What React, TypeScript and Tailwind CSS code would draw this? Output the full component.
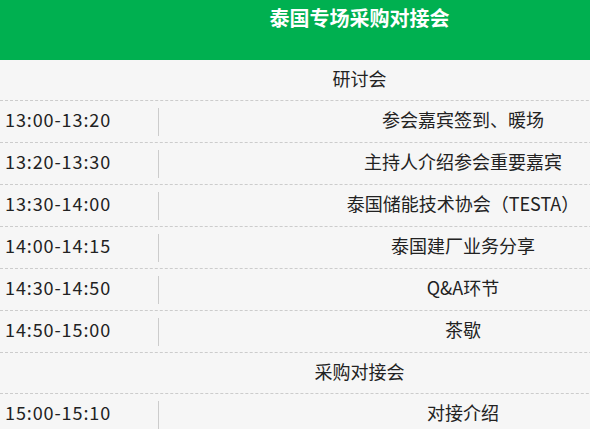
const rows1 = [
  ["13:00-13:20", "参会嘉宾签到、暖场"],
  ["13:20-13:30", "主持人介绍参会重要嘉宾"],
  ["13:30-14:00", "泰国储能技术协会（TESTA）"],
  ["14:00-14:15", "泰国建厂业务分享"],
  ["14:30-14:50", "Q&A环节"],
  ["14:50-15:00", "茶歇"],
];

const rows2 = [["15:00-15:10", "对接介绍"]];

function Section({ title }: { title: string }) {
  return (
    <div className="h-[41px] border-b border-dashed border-[#cccccc] flex items-center justify-center w-[719px]">
      <span className="pb-[3px]">{title}</span>
    </div>
  );
}

function Row({ time, text }: { time: string; text: string }) {
  return (
    <div className="h-[42px] border-b border-dashed border-[#cccccc] flex items-center">
      <div className="w-[159px] h-[28px] border-r border-[#cccccc] flex items-center pl-[5px] pb-[4px] tracking-[0.9px]">
        {time}
      </div>
      <div className="w-[608px] text-center pb-[4px]">{text}</div>
    </div>
  );
}

export default function App() {
  return (
    <div className="w-[590px] h-[429px] overflow-hidden bg-[#f6f6f6]">
      <div
        className="w-[767px] text-[18px] text-[#222222]"
        style={{ fontFamily: '"Microsoft YaHei", "Noto Sans CJK SC", sans-serif' }}
      >
        <div className="h-[60px] bg-[#00b050] w-[767px]">
          <div className="w-[719px] text-center text-white font-bold text-[20px] leading-[26px] pt-[5px]">
            泰国专场采购对接会
          </div>
        </div>
        <Section title="研讨会" />
        {rows1.map(([t, x]) => (
          <Row key={t} time={t} text={x} />
        ))}
        <Section title="采购对接会" />
        {rows2.map(([t, x]) => (
          <Row key={t} time={t} text={x} />
        ))}
      </div>
    </div>
  );
}
